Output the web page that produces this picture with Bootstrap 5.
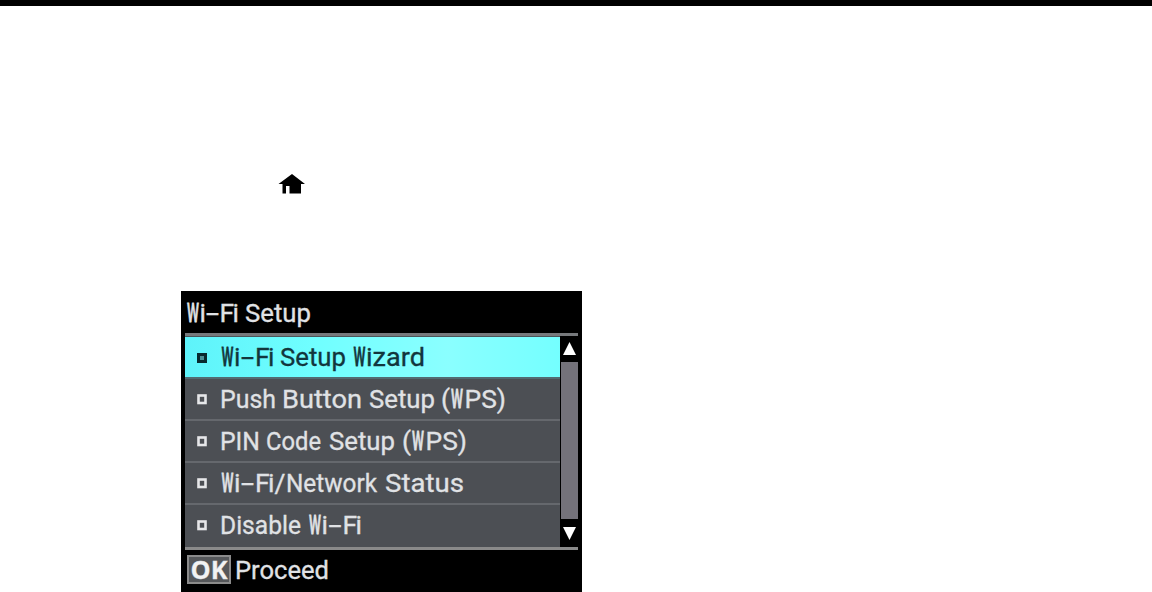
<!DOCTYPE html>
<html lang="en">
<head>
  <meta charset="UTF-8" />
  <meta name="viewport" content="width=device-width, initial-scale=1.0"/>
  <title>Wi-Fi Setup</title>
  <link href="https://cdn.jsdelivr.net/npm/bootstrap@5.3.0/dist/css/bootstrap.min.css" rel="stylesheet"/>
  <style>
    body {
      font-family: Roboto, "Liberation Sans", sans-serif;
      height: 592px;
    }
    .page-rule {
      height: 6px;
      background: #000;
    }
    .home-line {
      height: 285px;
      padding: 168px 0 0 278px;
    }
    .lcd {
      width: 401px;
      height: 301px;
      margin-left: 181px;
      background: #000;
    }
    .lcd svg {
      display: block;
      overflow: visible;
    }
    .lcd text {
      font-size: 26.5px;
      fill: #e0e2e5;
      stroke: #e0e2e5;
      stroke-width: 0.3;
    }
    /* the panel font has a very narrow W */
    .lcd .narrow-w {
      font-weight: 500;
      stroke-width: 0.8;
    }
    .lcd-title {
      height: 42px;
    }
    .lcd-body {
      height: 217px;
      width: 393px;
      margin-left: 4px;
      border-top: 3px solid #77797c;
      border-bottom: 3px solid #8a8a8a;
    }
    .menu-list {
      width: 375px;
      padding-top: 1px;
      background: #4d5458;
    }
    .menu-row {
      height: 42px;
      background: #4c4f54;
      border-bottom: 2px solid #65686d;
    }
    .menu-row:last-child {
      border-bottom: 0;
    }
    .menu-row rect {
      fill: none;
      stroke: #e6e7e9;
      stroke-width: 2.6;
    }
    .menu-row.selected {
      background: linear-gradient(to right, #5ef3fa, #70ffff 35%, #8affff 70%, #74ffff);
      border-bottom-color: #526b72;
    }
    .menu-row.selected text {
      fill: #12363d;
      stroke: #12363d;
    }
    .menu-row.selected rect {
      fill: #4b8f94;
      stroke: #08292e;
      stroke-width: 3;
    }
    .scroll-col {
      width: 17px;
      margin-left: 1px;
      background: #74727a;
    }
    .scroll-arrow {
      height: 26px;
      background: #000;
    }
    .scroll-arrow.down {
      height: 28px;
    }
    .lcd-foot {
      padding: 5px 0 0 6px;
    }
    .ok-key {
      width: 44px;
      height: 29px;
      background: #55575a;
      border: 2px solid #8b8b8b;
    }
    .ok-key text {
      font-family: "Open Sans", sans-serif;
      font-weight: 700;
      font-size: 25px;
      fill: #f2f2f2;
    }
  </style>
</head>
<body class="bg-white m-0 overflow-hidden">

  <div class="page-rule"></div>

  <div class="home-line">
    <svg class="d-block" width="28" height="20" viewBox="0 0 28 20">
      <path d="M14 0L27 10H23V19.5H11.5V12H8V19.5H4.5V10H0.5Z" fill="#000"/>
    </svg>
  </div>

  <div class="lcd">
    <div class="lcd-title">
      <svg width="401" height="42">
        <text class="narrow-w" transform="translate(6 30.5) scale(.51 1)">W</text>
        <text y="30.5"><tspan x="18.5">i</tspan><tspan x="25" textLength="13" lengthAdjust="spacingAndGlyphs">-</tspan><tspan x="38.5 51.5">Fi</tspan> <tspan x="64" textLength="66" lengthAdjust="spacingAndGlyphs">Setup</tspan></text>
      </svg>
    </div>

    <div class="lcd-body d-flex">
      <div class="menu-list">
        <div class="menu-row selected">
          <svg width="375" height="40">
            <rect x="13.5" y="17.5" width="7" height="7"/>
            <text class="narrow-w" transform="translate(36.5 29) scale(.51 1)">W</text>
            <text y="29"><tspan x="49">i</tspan><tspan x="56" textLength="13" lengthAdjust="spacingAndGlyphs">-</tspan><tspan x="70 83">Fi</tspan> <tspan x="95" textLength="66" lengthAdjust="spacingAndGlyphs">Setup</tspan></text>
            <text class="narrow-w" transform="translate(168.5 29) scale(.51 1)">W</text>
            <text x="181" y="29" textLength="59" lengthAdjust="spacingAndGlyphs">izard</text>
          </svg>
        </div>
        <div class="menu-row">
          <svg width="375" height="40">
            <rect x="13.5" y="16.5" width="7" height="7.5"/>
            <text y="29"><tspan x="35" textLength="56" lengthAdjust="spacingAndGlyphs">Push</tspan> <tspan x="97" textLength="80" lengthAdjust="spacingAndGlyphs">Button</tspan> <tspan x="184" textLength="66" lengthAdjust="spacingAndGlyphs">Setup</tspan> <tspan x="256">(</tspan></text>
            <text class="narrow-w" transform="translate(266 29) scale(.51 1)">W</text>
            <text x="279.5" y="29" textLength="41.5" lengthAdjust="spacingAndGlyphs">PS)</text>
          </svg>
        </div>
        <div class="menu-row">
          <svg width="375" height="40">
            <rect x="13.5" y="16.5" width="7" height="7.5"/>
            <text y="29"><tspan x="35" textLength="40" lengthAdjust="spacingAndGlyphs">PIN</tspan> <tspan x="81" textLength="55" lengthAdjust="spacingAndGlyphs">Code</tspan> <tspan x="144" textLength="66" lengthAdjust="spacingAndGlyphs">Setup</tspan> <tspan x="217">(</tspan></text>
            <text class="narrow-w" transform="translate(227 29) scale(.51 1)">W</text>
            <text x="240.5" y="29" textLength="41.5" lengthAdjust="spacingAndGlyphs">PS)</text>
          </svg>
        </div>
        <div class="menu-row">
          <svg width="375" height="40">
            <rect x="13.5" y="16.5" width="7" height="7.5"/>
            <text class="narrow-w" transform="translate(36.5 29) scale(.51 1)">W</text>
            <text y="29"><tspan x="49">i</tspan><tspan x="56" textLength="13" lengthAdjust="spacingAndGlyphs">-</tspan><tspan x="70 83 89.5">Fi/</tspan><tspan x="101" textLength="91" lengthAdjust="spacingAndGlyphs">Network</tspan> <tspan x="200" textLength="79" lengthAdjust="spacingAndGlyphs">Status</tspan></text>
          </svg>
        </div>
        <div class="menu-row">
          <svg width="375" height="40">
            <rect x="13.5" y="16.5" width="7" height="7.5"/>
            <text x="35" y="29" textLength="81" lengthAdjust="spacingAndGlyphs">Disable</text>
            <text class="narrow-w" transform="translate(124 29) scale(.51 1)">W</text>
            <text y="29"><tspan x="136.5">i</tspan><tspan x="143.5" textLength="13" lengthAdjust="spacingAndGlyphs">-</tspan><tspan x="157.5 170.5">Fi</tspan></text>
          </svg>
        </div>
      </div>

      <div class="scroll-col d-flex flex-column justify-content-between">
        <div class="scroll-arrow">
          <svg width="17" height="26"><path d="M8.5 6L15 19H2Z" fill="#fff"/></svg>
        </div>
        <div class="scroll-arrow down">
          <svg width="17" height="28"><path d="M2 8H15L8.5 21Z" fill="#fff"/></svg>
        </div>
      </div>
    </div>

    <div class="lcd-foot d-flex">
      <div class="ok-key">
        <svg width="40" height="25">
          <text x="1.5" y="21.5" textLength="37" lengthAdjust="spacingAndGlyphs">OK</text>
        </svg>
      </div>
      <svg width="100" height="32">
        <text x="4" y="23.5" textLength="94" lengthAdjust="spacingAndGlyphs">Proceed</text>
      </svg>
    </div>
  </div>

  <script src="https://cdn.jsdelivr.net/npm/bootstrap@5.3.0/dist/js/bootstrap.bundle.min.js"></script>
</body>
</html>
